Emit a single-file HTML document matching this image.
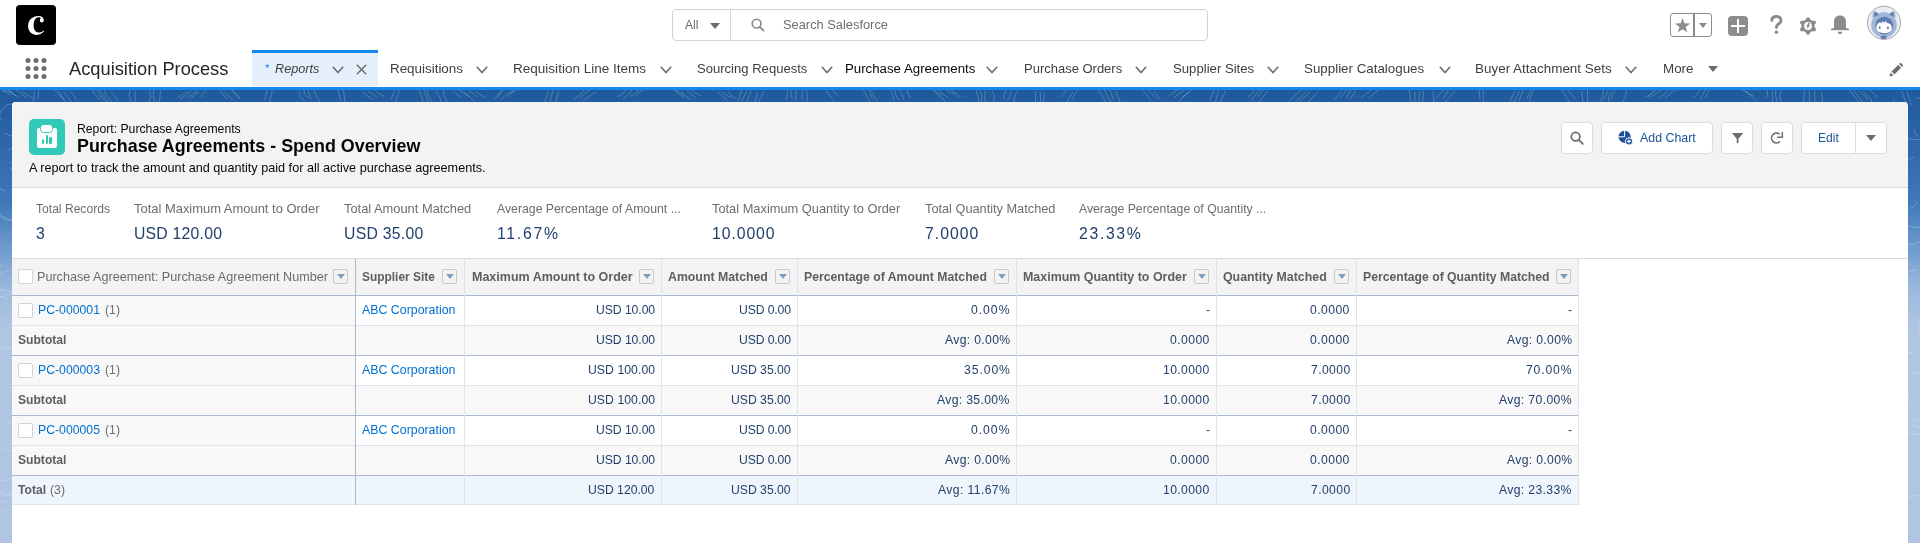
<!DOCTYPE html>
<html><head><meta charset="utf-8">
<style>
*{box-sizing:border-box;margin:0;padding:0}
html,body{width:1920px;height:543px;overflow:hidden;background:#fff;font-family:"Liberation Sans",sans-serif}
.a{position:absolute}
.t{position:absolute;line-height:1;white-space:pre;font-family:"Liberation Sans",sans-serif;will-change:transform}
svg{position:absolute;overflow:visible}
.btn{position:absolute;background:#fff;border:1px solid #dddbda;border-radius:4px}
.cb{position:absolute;width:15px;height:15px;background:#fff;border:1px solid #d4d4d4;border-radius:2px}
.dd{position:absolute;width:15px;height:15px;border:1px solid #c9c9c9;border-radius:2px}
.dd:after{content:"";position:absolute;left:3px;top:4px;border-left:4px solid transparent;border-right:4px solid transparent;border-top:5px solid #7f9cc0}
</style></head><body>
<!-- global header -->
<div class="a" style="left:16px;top:5px;width:40px;height:40px;background:#000;border-radius:4px"></div>
<svg style="left:26px;top:14px" width="20" height="24" viewBox="0 0 20 24"><path d="M12.6 2.1 C6.2 2.1 2.1 6.4 2.1 12.1 C2.1 17.6 5.9 20.9 10.8 20.9 C14 20.9 16.3 19.4 18.3 17.1 L17.6 16.4 C16.2 17.7 14.6 18.5 12.7 18.5 C9.5 18.5 7.6 15.8 7.6 11.6 C7.6 6.9 9.6 3.3 12.3 3.3 C13.6 3.3 14.3 3.8 14.8 4.6 C14.2 5 13.9 5.6 13.9 6.4 C13.9 7.6 14.7 8.4 15.8 8.4 C17 8.4 17.8 7.5 17.8 6.3 C17.8 4 15.8 2.1 12.6 2.1 Z" fill="#fff"/></svg>

<div class="a" style="left:672px;top:9px;width:536px;height:32px;border:1px solid #d4d4d4;border-radius:4px"></div>
<div class="a" style="left:730px;top:10px;width:1px;height:30px;background:#d4d4d4"></div>
<div class="a" style="left:710px;top:23px;border-left:5px solid transparent;border-right:5px solid transparent;border-top:6px solid #706e6b"></div>
<svg style="left:751px;top:18px" width="14" height="14" viewBox="0 0 14 14"><circle cx="5.6" cy="5.6" r="4.4" fill="none" stroke="#8a8886" stroke-width="1.6"/><path d="M8.8 8.8 L12.6 12.6" stroke="#8a8886" stroke-width="1.8" stroke-linecap="round"/></svg>

<!-- favorites -->
<div class="a" style="left:1670px;top:13px;width:42px;height:24px;border:1px solid #8c8c8c;border-radius:3px"></div>
<div class="a" style="left:1693px;top:14px;width:2px;height:22px;background:#8c8c8c"></div>
<svg style="left:1674.5px;top:17.8px" width="15.2" height="14.6" viewBox="0 0 24 23"><path d="M12 0 L15 8.3 L24 8.6 L16.9 14 L19.4 22.6 L12 17.6 L4.6 22.6 L7.1 14 L0 8.6 L9 8.3 Z" fill="#8c8c8c"/></svg>
<div class="a" style="left:1699px;top:23px;border-left:4px solid transparent;border-right:4px solid transparent;border-top:5px solid #8c8c8c"></div>
<!-- plus -->
<div class="a" style="left:1728px;top:16px;width:20px;height:20px;background:#8c8c8c;border-radius:4px"></div>
<div class="a" style="left:1731px;top:24.8px;width:14px;height:2.6px;background:#fff"></div>
<div class="a" style="left:1736.7px;top:19px;width:2.6px;height:14px;background:#fff"></div>
<!-- help -->
<svg style="left:1770px;top:15px" width="13" height="20" viewBox="0 0 13 20"><path d="M1.8 5.6 C1.8 2.8 3.8 1.5 6.4 1.5 C9.2 1.5 11 3 11 5.4 C11 7.4 9.6 8.3 8.2 9.2 C7 10 6.4 10.8 6.4 12.6" fill="none" stroke="#8c8c8c" stroke-width="2.9" stroke-linecap="round"/><circle cx="6.4" cy="17.2" r="1.75" fill="#8c8c8c"/></svg>
<!-- gear -->
<svg style="left:1799px;top:16.7px" width="18" height="18" viewBox="0 0 18 18"><g fill="#8c8c8c"><circle cx="9" cy="9" r="6.7"/><circle cx="9.00" cy="2.20" r="2.05"/><circle cx="14.89" cy="5.60" r="2.05"/><circle cx="14.89" cy="12.40" r="2.05"/><circle cx="9.00" cy="15.80" r="2.05"/><circle cx="3.11" cy="12.40" r="2.05"/><circle cx="3.11" cy="5.60" r="2.05"/></g><circle cx="9" cy="9" r="3.9" fill="#fff"/><path d="M9.5 5.7 L11.3 5.7 L9.8 8.3 L11.1 8.3 L7.7 12.5 L8.8 9.7 L7.2 9.7 Z" fill="#8c8c8c"/></svg>
<!-- bell -->
<svg style="left:1830px;top:15px" width="20" height="20" viewBox="0 0 20 20"><path d="M4 12.5 L4 7 C4 3 6.3 0.5 10 0.5 C13.7 0.5 16 3 16 7 L16 12.5 C16 13.1 16.8 13.3 18.4 13.4 C19.3 13.5 19.3 15.3 18.4 15.3 L1.6 15.3 C0.7 15.3 0.7 13.5 1.6 13.4 C3.2 13.3 4 13.1 4 12.5 Z" fill="#8c8c8c"/><path d="M7.9 16.7 L12.1 16.7 C12.1 18.2 11.2 19.1 10 19.1 C8.8 19.1 7.9 18.2 7.9 16.7 Z" fill="#8c8c8c"/></svg>
<!-- avatar -->
<svg style="left:1867px;top:6px" width="34" height="34" viewBox="0 0 34 34">
<defs><clipPath id="avc"><circle cx="17" cy="16.8" r="16.3"/></clipPath></defs>
<circle cx="17" cy="16.8" r="16.6" fill="#e8ecf3" stroke="#8a8a8a" stroke-width="0.7"/>
<g clip-path="url(#avc)">
<circle cx="17" cy="19" r="12.8" fill="#a3b6d5"/>
<path d="M5.5 12 C5 8.5 6 5.5 7.5 5.2 C9.5 5.5 11.5 7.5 12.5 8.5 Z M28.5 12 C29 8.5 28 5.5 26.5 5.2 C24.5 5.5 22.5 7.5 21.5 8.5 Z" fill="#a3b6d5"/>
<path d="M7.3 11 L7.6 5.6 C9 6 10.6 7.4 11.6 8.8 Z M26.7 11 L26.4 5.6 C25 6 23.4 7.4 22.4 8.8 Z" fill="#5d7db0"/>
<circle cx="17.3" cy="19.6" r="8.9" fill="#5d7db0"/>
<path d="M9.4 22.5 C9.2 18.8 11 16.5 13.2 16.3 L15.3 17.6 L15 15.2 L17.6 16.6 L19.2 14.5 L19.6 16.9 C22.6 16.8 25 19 24.9 22.5 C24.8 25.5 21.8 27.2 17.2 27.2 C12.6 27.2 9.6 25.5 9.4 22.5 Z" fill="#fff"/>
<ellipse cx="12.7" cy="21.7" rx="0.95" ry="1.4" fill="#5d7db0"/><ellipse cx="20.9" cy="22" rx="0.95" ry="1.4" fill="#5d7db0"/>
<ellipse cx="16.7" cy="31.4" rx="3.1" ry="1.8" fill="#5d7db0"/>
</g></svg>
<!-- context bar -->
<svg style="left:24.8px;top:58px" width="22" height="22" viewBox="0 0 22 22"><g fill="#706e6b">
<circle cx="3" cy="2.6" r="2.5"/><circle cx="11" cy="2.6" r="2.5"/><circle cx="19" cy="2.6" r="2.5"/>
<circle cx="3" cy="10.5" r="2.5"/><circle cx="11" cy="10.5" r="2.5"/><circle cx="19" cy="10.5" r="2.5"/>
<circle cx="3" cy="18.5" r="2.5"/><circle cx="11" cy="18.5" r="2.5"/><circle cx="19" cy="18.5" r="2.5"/></g></svg>
<div class="a" style="left:252px;top:50px;width:126px;height:36px;background:#e6f0fc"></div>
<div class="a" style="left:252px;top:50px;width:126px;height:3px;background:#1589ee"></div>
<div class="t" style="left:265px;top:63px;font-size:11.5px;color:#1589ee">*</div>
<!-- chevrons -->
<svg style="left:332.00px;top:66px" width="12" height="8" viewBox="0 0 12 8"><path d="M0.8 0.8 L6 6.6 L11.2 0.8" fill="none" stroke="#706e6b" stroke-width="1.6"/></svg>
<svg style="left:476.25px;top:66px" width="12" height="8" viewBox="0 0 12 8"><path d="M0.8 0.8 L6 6.6 L11.2 0.8" fill="none" stroke="#706e6b" stroke-width="1.6"/></svg>
<svg style="left:660.00px;top:66px" width="12" height="8" viewBox="0 0 12 8"><path d="M0.8 0.8 L6 6.6 L11.2 0.8" fill="none" stroke="#706e6b" stroke-width="1.6"/></svg>
<svg style="left:820.50px;top:66px" width="12" height="8" viewBox="0 0 12 8"><path d="M0.8 0.8 L6 6.6 L11.2 0.8" fill="none" stroke="#706e6b" stroke-width="1.6"/></svg>
<svg style="left:986.00px;top:66px" width="12" height="8" viewBox="0 0 12 8"><path d="M0.8 0.8 L6 6.6 L11.2 0.8" fill="none" stroke="#706e6b" stroke-width="1.6"/></svg>
<svg style="left:1135.00px;top:66px" width="12" height="8" viewBox="0 0 12 8"><path d="M0.8 0.8 L6 6.6 L11.2 0.8" fill="none" stroke="#706e6b" stroke-width="1.6"/></svg>
<svg style="left:1267.00px;top:66px" width="12" height="8" viewBox="0 0 12 8"><path d="M0.8 0.8 L6 6.6 L11.2 0.8" fill="none" stroke="#706e6b" stroke-width="1.6"/></svg>
<svg style="left:1438.75px;top:66px" width="12" height="8" viewBox="0 0 12 8"><path d="M0.8 0.8 L6 6.6 L11.2 0.8" fill="none" stroke="#706e6b" stroke-width="1.6"/></svg>
<svg style="left:1625.00px;top:66px" width="12" height="8" viewBox="0 0 12 8"><path d="M0.8 0.8 L6 6.6 L11.2 0.8" fill="none" stroke="#706e6b" stroke-width="1.6"/></svg>
<svg style="left:356px;top:63.5px" width="11" height="11" viewBox="0 0 11 11"><path d="M0.8 0.8 L10.2 10.2 M10.2 0.8 L0.8 10.2" stroke="#706e6b" stroke-width="1.5"/></svg>
<div class="a" style="left:1708px;top:66px;border-left:5px solid transparent;border-right:5px solid transparent;border-top:6px solid #706e6b"></div>
<!-- pencil -->
<svg style="left:1889px;top:63px" width="14" height="14" viewBox="0 0 14 14"><path d="M0.4 13.6 L1.5 9.5 L4.5 12.5 Z M2.5 8.6 L9.2 1.9 L12.1 4.8 L5.4 11.5 Z M10.1 1 L10.9 0.2 C11.3 -0.2 11.9 -0.2 12.3 0.2 L13.8 1.7 C14.2 2.1 14.2 2.7 13.8 3.1 L13 3.9 Z" fill="#706e6b"/></svg>

<div class="a" style="left:0;top:87px;width:1920px;height:3px;background:#1589ee"></div>

<!-- page background -->
<div class="a" style="left:0;top:90px;width:1920px;height:453px;background:linear-gradient(to bottom,#1d5a9b 0px,#2a64a8 44px,#3d77b8 110px,#6b98cc 155px,#9cb9dd 199px,#b0c5e2 239px,#b0c5e2 453px)"></div>

<!-- pattern -->
<svg style="left:0;top:90px;overflow:hidden" width="1920" height="453" viewBox="0 0 1920 453"><path fill="none" stroke="#ffffff" stroke-opacity="0.22" stroke-width="1" d="M0.0 -1.2 L11.1 5.0 M5.6 -1.3 L16.4 5.8 M9.8 1.6 L18.7 7.7 M15.8 -0.2 L26.7 7.9 M21.9 1.3 L33.6 8.9 M34.3 0.4 L33.6 15.0 M38.7 -2.0 L38.0 9.4 M54.0 -0.7 L64.3 10.2 M58.4 1.1 L64.8 10.9 M63.6 1.8 L72.9 13.7 M71.0 1.6 L76.8 9.8 M91.4 -1.7 Q94.4 4.3 100.1 10.2 M97.3 -1.0 Q98.2 5.0 105.4 11.1 M99.6 0.2 Q103.4 6.3 108.0 12.4 M104.5 0.6 Q105.5 6.5 112.6 12.5 M110.7 1.9 Q116.5 6.4 117.4 11.0 M130.4 -1.8 Q127.8 5.0 130.7 11.8 M135.3 1.3 Q134.6 6.3 135.6 11.4 M149.9 0.3 Q151.9 7.2 148.5 14.0 M154.2 -0.8 Q152.2 5.4 154.6 11.6 M160.4 0.5 Q160.1 7.7 159.0 14.8 M186.7 1.9 L177.7 7.6 M191.1 1.3 L179.7 9.7 M197.1 0.9 L187.4 7.6 M199.1 1.4 L190.5 8.9 M207.6 -1.2 L199.6 7.3 M220.0 0.3 L226.8 9.0 M224.3 1.9 L233.1 10.3 M230.6 -1.4 L240.0 9.2 M232.2 0.8 L239.6 7.8 M267.3 -1.7 L264.8 10.0 M272.3 0.9 L269.0 15.0 M299.3 1.8 Q298.2 6.3 304.7 10.8 M304.3 -0.5 Q302.8 4.0 309.0 8.5 M307.6 -1.0 Q308.7 4.0 311.0 9.0 M313.3 -0.2 Q316.7 6.7 320.7 13.6 M338.2 -0.0 L340.8 11.1 M343.4 -2.0 L345.0 13.5 M362.2 1.6 Q366.4 5.7 373.5 9.8 M367.5 1.2 Q375.3 4.5 376.6 7.8 M373.7 -0.7 Q375.9 2.7 383.9 6.1 M395.1 -0.9 L391.2 9.4 M399.5 -0.0 L395.7 11.8 M419.4 0.8 Q422.3 8.1 424.0 15.4 M424.0 -1.5 Q425.9 5.6 428.4 12.6 M427.5 -1.4 Q426.5 5.6 432.8 12.6 M435.2 0.6 Q440.5 6.3 441.0 11.9 M443.1 -0.1 Q442.9 6.5 448.0 13.1 M452.6 0.8 L461.9 7.9 M457.7 -0.4 L469.4 6.6 M463.8 1.7 L475.3 12.0 M469.0 0.5 L477.7 6.8 M475.9 1.5 L486.1 8.4 M501.6 1.2 Q501.3 5.0 494.2 8.8 M505.8 -1.6 Q499.8 1.9 496.8 5.4 M513.5 0.9 Q503.3 5.5 500.9 10.1 M516.6 -0.3 Q510.7 2.8 508.5 5.9 M548.0 1.7 L544.1 14.3 M552.9 0.1 L549.1 15.6 M558.7 0.3 L555.6 12.6 M584.7 0.1 L574.1 9.7 M590.4 -0.5 L579.8 7.6 M596.1 1.4 L583.6 10.3 M627.1 -1.9 Q626.0 2.4 617.4 6.8 M632.1 0.3 Q627.7 4.6 623.3 9.0 M637.9 -0.3 Q637.6 3.0 630.0 6.4 M644.7 -1.5 Q639.6 2.2 635.7 5.9 M671.4 -1.5 Q679.7 1.8 683.5 5.0 M675.5 0.7 Q678.4 4.3 684.1 7.8 M680.8 0.9 Q683.0 5.5 691.1 10.0 M686.5 0.1 Q690.4 3.8 695.3 7.5 M690.4 -1.4 Q693.2 2.2 700.7 5.7 M717.1 1.7 Q723.2 6.1 727.3 10.5 M721.7 1.6 Q723.9 4.6 731.0 7.7 M728.2 1.6 Q729.4 5.3 736.5 8.9 M741.8 -1.2 L738.0 11.5 M747.1 0.3 L740.5 13.5 M751.2 0.8 L745.6 14.6 M757.6 1.3 L755.1 13.1 M764.2 1.0 L758.3 12.5 M787.1 -0.9 Q787.9 4.6 786.0 10.1 M792.2 -1.7 Q789.3 3.7 792.8 9.1 M796.6 -1.2 Q795.4 5.1 796.1 11.4 M802.9 -0.4 Q801.3 4.7 802.0 9.8 M806.0 -1.6 Q808.6 6.1 806.5 13.9 M826.6 1.0 L834.8 11.8 M831.1 -1.4 L838.5 6.3 M863.2 -0.4 L870.4 12.4 M868.7 -0.1 L872.7 9.5 M871.3 0.5 L876.8 11.3 M890.9 0.1 Q892.6 5.3 894.3 10.6 M895.3 0.3 Q894.3 5.2 899.5 10.1 M899.3 0.0 Q903.7 5.2 904.0 10.4 M906.8 -0.9 Q907.3 3.8 910.4 8.5 M929.7 -1.7 L941.7 5.2 M934.9 1.7 L945.6 11.5 M938.3 -0.0 L948.1 8.3 M945.3 -0.3 L954.5 4.5 M949.9 -0.9 L960.7 7.3 M975.8 -0.4 Q978.7 6.2 978.6 12.8 M979.9 0.3 Q982.5 6.2 981.6 12.1 M985.1 0.9 Q983.8 8.2 986.5 15.6 M992.3 1.2 Q995.9 6.4 993.0 11.5 M1006.7 -0.6 Q1002.6 4.6 1004.0 9.8 M1011.4 0.4 Q1010.5 5.5 1007.5 10.5 M1017.4 1.3 Q1012.8 7.1 1014.0 13.0 M1035.5 1.4 L1035.5 13.2 M1040.0 0.8 L1040.9 14.4 M1044.2 1.8 L1043.4 13.4 M1068.5 -1.8 L1060.7 6.7 M1073.0 1.7 L1067.0 11.7 M1077.2 -0.1 L1071.9 10.1 M1098.6 -0.2 L1106.2 13.0 M1104.2 -0.2 L1111.6 12.9 M1109.6 -1.4 L1113.7 10.3 M1115.6 1.0 L1120.6 13.7 M1143.1 0.2 L1150.8 10.3 M1148.0 -0.1 L1157.5 9.3 M1154.4 1.6 L1160.5 9.7 M1178.2 -0.6 L1168.5 6.0 M1183.6 0.8 L1173.5 7.6 M1188.5 1.7 L1177.9 13.0 M1192.8 -0.7 L1181.0 8.2 M1214.2 -0.4 L1209.7 10.9 M1218.6 0.2 L1215.1 13.1 M1225.5 1.0 L1219.8 13.1 M1254.8 -1.9 Q1254.1 2.4 1248.0 6.7 M1259.7 0.2 Q1254.2 5.5 1251.3 10.8 M1263.9 -1.9 Q1261.9 2.3 1257.4 6.5 M1267.4 0.8 Q1262.9 6.9 1258.6 12.9 M1301.0 -0.0 L1289.4 10.7 M1306.0 1.7 L1295.6 11.5 M1310.6 1.4 L1299.6 11.6 M1317.8 1.8 L1307.4 12.7 M1341.8 1.0 L1333.6 10.5 M1347.7 -1.2 L1339.8 8.2 M1351.5 -1.8 L1346.0 8.7 M1355.6 1.1 L1349.9 10.1 M1373.4 -1.2 Q1366.3 3.2 1361.5 7.7 M1378.5 0.0 Q1372.8 4.4 1368.0 8.7 M1409.2 0.2 L1410.9 13.9 M1415.0 1.8 L1414.6 14.7 M1419.9 1.5 L1418.2 16.0 M1423.6 1.2 L1422.5 12.4 M1433.1 1.2 L1434.2 15.9 M1443.4 -0.3 L1435.4 9.5 M1449.2 -1.4 L1442.8 9.3 M1455.0 1.0 L1445.3 12.2 M1478.8 -1.4 L1480.1 9.7 M1483.1 0.1 L1483.4 12.2 M1514.6 1.2 L1508.6 15.1 M1519.4 1.3 L1512.5 15.2 M1523.4 -1.4 L1519.0 11.1 M1531.6 -1.7 L1526.9 9.2 M1533.0 -0.6 L1529.4 11.7 M1561.3 -0.2 L1569.5 12.0 M1567.1 -0.8 L1576.2 10.2 M1581.6 1.0 L1583.3 14.7 M1587.5 -1.7 L1587.7 12.9 M1603.4 -0.7 Q1604.1 5.7 1599.6 12.2 M1607.6 0.7 Q1606.8 5.6 1602.7 10.4 M1612.1 0.4 Q1607.2 6.4 1609.0 12.4 M1616.7 -0.4 Q1610.9 4.5 1611.9 9.5 M1626.7 0.6 Q1626.7 6.5 1622.5 12.4 M1652.8 0.8 Q1652.7 3.9 1644.9 7.1 M1658.4 -1.9 Q1651.8 2.7 1648.0 7.4 M1662.2 -0.5 Q1656.5 3.4 1650.6 7.2 M1669.5 -1.4 Q1666.1 3.6 1658.4 8.6 M1676.0 0.0 Q1667.9 4.1 1665.5 8.1 M1700.1 0.3 L1693.4 8.5 M1705.5 -0.6 L1699.8 10.0 M1709.9 -1.5 L1705.0 8.1 M1741.1 -0.7 L1753.8 6.3 M1745.4 0.7 L1756.9 11.4 M1766.4 -1.3 Q1769.6 3.9 1765.1 9.1 M1772.3 0.7 Q1773.8 7.6 1771.5 14.6 M1775.9 -1.9 Q1774.1 4.8 1777.1 11.6 M1781.2 0.3 Q1778.4 5.7 1780.9 11.1 M1804.8 0.7 L1803.0 14.4 M1809.1 -0.1 L1809.5 15.6 M1814.5 1.0 L1815.2 14.8 M1821.3 1.4 L1823.1 14.1 M1849.9 0.1 Q1854.0 6.3 1859.4 12.5 M1854.0 0.5 Q1858.0 6.7 1863.2 12.8 M1859.4 1.5 Q1866.6 5.8 1867.8 10.0 M1863.4 1.5 Q1871.6 7.6 1872.2 13.7 M1869.7 0.2 Q1874.8 3.8 1877.4 7.5 M1901.7 1.0 L1906.9 14.9 M1906.8 1.2 L1911.8 15.8 M2.4 29.2 A18.0 18.0 0 0 1 -10.4 11.2 M-14.5 16.3 A11.8 11.8 0 0 1 -12.7 4.6 M2.6 1.6 A11.1 11.1 0 0 1 11.6 2.1 M-0.8 28.3 A14.8 14.8 0 0 1 13.3 13.4 M20.5 45.8 A18.4 18.4 0 0 1 4.8 43.1 M-16.2 77.6 A26.4 26.4 0 0 1 -26.2 52.5 M7.5 60.8 A12.4 12.4 0 0 1 16.5 57.6 M20.8 75.6 A9.1 9.1 0 0 1 9.9 78.3 M21.2 49.6 A27.8 27.8 0 0 1 26.8 83.1 M-6.5 95.5 A25.1 25.1 0 0 1 -9.3 76.9 M9.4 72.8 A10.7 10.7 0 0 1 18.3 73.3 M5.1 101.0 A19.0 19.0 0 0 1 -7.0 90.3 M16.5 129.6 A21.0 21.0 0 0 1 -0.9 123.9 M10.7 131.1 A22.7 22.7 0 0 1 -7.8 112.5 M-29.8 119.7 A29.6 29.6 0 0 1 -23.8 88.5 M-24.2 124.6 A20.9 20.9 0 0 1 -10.3 109.5 M2.4 175.4 A24.6 24.6 0 0 1 -16.8 167.0 M20.9 164.9 A11.3 11.3 0 0 1 21.3 177.9 M-24.7 200.1 A28.4 28.4 0 0 1 -16.6 180.1 M-7.0 217.2 A22.2 22.2 0 0 1 -13.5 191.9 M-7.7 199.4 A19.4 19.4 0 0 1 9.9 180.8 M-5.5 212.8 A19.7 19.7 0 0 1 18.3 205.5 M-10.4 208.4 A17.6 17.6 0 0 1 8.6 209.6 M-3.2 200.4 A23.8 23.8 0 0 1 16.0 205.3 M12.1 257.8 A13.7 13.7 0 0 1 -5.1 248.7 M10.1 232.4 A17.9 17.9 0 0 1 14.7 247.7 M15.5 224.5 A21.4 21.4 0 0 1 29.4 242.1 M-28.0 257.4 A28.0 28.0 0 0 1 -2.5 241.1 M0.3 299.1 A9.2 9.2 0 0 1 2.2 288.2 M-5.2 314.0 A13.8 13.8 0 0 1 2.1 308.2 M12.1 333.1 A11.8 11.8 0 0 1 4.1 329.6 M15.8 295.7 A26.3 26.3 0 0 1 30.2 304.8 M32.6 333.2 A23.5 23.5 0 0 1 31.1 349.9 M25.2 355.4 A21.2 21.2 0 0 1 -1.2 356.8 M-20.7 357.3 A17.0 17.0 0 0 1 -15.2 347.2 M13.9 383.2 A9.7 9.7 0 0 1 2.2 390.5 M14.3 405.0 A24.1 24.1 0 0 1 -4.8 399.1 M5.8 411.9 A9.9 9.9 0 0 1 -2.5 409.3 M-9.6 425.2 A11.5 11.5 0 0 1 6.5 421.3 M28.1 420.2 A20.5 20.5 0 0 1 23.0 447.5 M22.0 421.9 A11.9 11.9 0 0 1 23.9 438.3 M4.3 455.8 A12.7 12.7 0 0 1 -0.9 447.6 M10.3 456.4 A11.6 11.6 0 0 1 1.2 455.4 M1900.3 -1.4 A18.8 18.8 0 0 1 1913.5 -6.8 M1896.4 21.7 A19.9 19.9 0 0 1 1894.0 9.3 M1915.4 8.1 A19.4 19.4 0 0 1 1933.3 18.0 M1919.9 49.4 A22.3 22.3 0 0 1 1904.7 47.1 M1924.3 22.8 A15.9 15.9 0 0 1 1938.5 36.3 M1918.5 46.3 A8.4 8.4 0 0 1 1913.8 39.8 M1893.2 63.1 A27.4 27.4 0 0 1 1879.3 31.3 M1888.7 60.6 A21.4 21.4 0 0 1 1893.9 45.1 M1891.4 86.2 A14.9 14.9 0 0 1 1892.9 70.2 M1900.7 96.5 A14.9 14.9 0 0 1 1903.3 82.8 M1895.9 86.4 A26.4 26.4 0 0 1 1913.7 66.9 M1894.8 107.3 A19.4 19.4 0 0 1 1887.8 96.0 M1917.1 110.8 A8.9 8.9 0 0 1 1910.0 118.2 M1940.8 105.5 A25.8 25.8 0 0 1 1934.3 126.9 M1923.4 137.0 A28.2 28.2 0 0 1 1892.6 122.9 M1927.2 144.5 A21.9 21.9 0 0 1 1908.2 154.7 M1904.9 139.0 A9.3 9.3 0 0 1 1902.7 131.0 M1916.9 179.8 A28.4 28.4 0 0 1 1883.6 166.5 M1887.5 149.7 A23.7 23.7 0 0 1 1908.6 129.2 M1921.8 170.0 A13.7 13.7 0 0 1 1927.2 180.6 M1930.2 194.5 A28.0 28.0 0 0 1 1933.0 218.0 M1903.3 234.5 A26.6 26.6 0 0 1 1885.0 207.5 M1916.6 227.0 A15.6 15.6 0 0 1 1918.3 244.2 M1905.2 266.9 A22.1 22.1 0 0 1 1900.1 247.4 M1919.6 243.8 A8.7 8.7 0 0 1 1926.5 244.7 M1896.8 249.8 A9.0 9.0 0 0 1 1904.7 243.1 M1900.5 281.9 A27.4 27.4 0 0 1 1900.9 244.4 M1903.7 274.6 A14.0 14.0 0 0 1 1910.6 262.1 M1902.3 272.8 A13.0 13.0 0 0 1 1912.8 272.6 M1888.3 297.0 A20.0 20.0 0 0 1 1884.3 281.2 M1892.6 278.0 A22.3 22.3 0 0 1 1912.9 262.3 M1914.6 318.4 A15.3 15.3 0 0 1 1910.1 298.2 M1902.2 283.5 A23.8 23.8 0 0 1 1929.5 291.8 M1937.4 327.8 A26.1 26.1 0 0 1 1907.4 326.6 M1898.4 338.4 A17.1 17.1 0 0 1 1894.3 318.5 M1899.6 342.6 A22.2 22.2 0 0 1 1893.9 316.2 M1939.7 308.7 A24.2 24.2 0 0 1 1938.9 343.3 M1883.6 350.0 A26.7 26.7 0 0 1 1904.5 325.9 M1886.3 363.3 A21.7 21.7 0 0 1 1886.1 341.0 M1909.7 335.3 A16.7 16.7 0 0 1 1926.6 346.3 M1898.0 388.1 A23.7 23.7 0 0 1 1885.6 370.7 M1931.7 343.6 A26.5 26.5 0 0 1 1945.6 369.4 M1895.5 350.6 A23.6 23.6 0 0 1 1926.3 348.0 M1902.4 414.0 A21.7 21.7 0 0 1 1886.4 394.3 M1943.9 417.2 A28.7 28.7 0 0 1 1940.3 437.4 M1906.1 409.9 A17.2 17.2 0 0 1 1922.0 405.9 M1922.4 467.2 A23.7 23.7 0 0 1 1909.3 474.5"/></svg>
<!-- card -->
<div class="a" style="left:12px;top:102px;width:1896px;height:460px;background:#fff;border-radius:4px 4px 0 0;overflow:hidden">
  <div class="a" style="left:0;top:0;width:1896px;height:86px;background:#f3f3f3;border-bottom:1px solid #dddbda"></div>
</div>
<!-- report icon -->
<div class="a" style="left:29px;top:119px;width:36px;height:36px;background:#33c9b9;border-radius:5px"></div>
<div class="a" style="left:37px;top:128px;width:20px;height:20px;background:#fff;border-radius:2px"></div>
<div class="a" style="left:40.3px;top:124.2px;width:13px;height:8.6px;background:#fff;border:1.5px solid #33c9b9;border-radius:3.6px"></div>
<div class="a" style="left:42px;top:139px;width:2.3px;height:4.5px;background:#33c9b9;border-radius:1px"></div>
<div class="a" style="left:45.6px;top:135px;width:2.3px;height:8.5px;background:#33c9b9;border-radius:1px"></div>
<div class="a" style="left:49.4px;top:137px;width:2.5px;height:6.5px;background:#33c9b9;border-radius:1px"></div>

<!-- buttons -->
<div class="btn" style="left:1561px;top:122px;width:32px;height:32px"></div>
<svg style="left:1570px;top:131px" width="14" height="14" viewBox="0 0 14 14"><circle cx="5.6" cy="5.6" r="4.3" fill="none" stroke="#706e6b" stroke-width="1.7"/><path d="M8.8 8.8 L12.8 12.8" stroke="#706e6b" stroke-width="1.9" stroke-linecap="round"/></svg>
<div class="btn" style="left:1601px;top:122px;width:112px;height:32px"></div>
<svg style="left:1617px;top:130px" width="16" height="16" viewBox="0 0 16 16"><circle cx="7.6" cy="6.8" r="6.1" fill="#1b5297"/><path d="M1.2 6.8 L7.6 6.8 L7.6 0.4" fill="none" stroke="#fff" stroke-width="1"/><circle cx="12" cy="11.4" r="3.7" fill="#1b5297" stroke="#fff" stroke-width="1"/><path d="M10 11.4 L14 11.4 M12 9.5 L12 13.3" stroke="#fff" stroke-width="1.2"/></svg>
<div class="btn" style="left:1721px;top:122px;width:32px;height:32px"></div>
<svg style="left:1731.5px;top:132px" width="12" height="12" viewBox="0 0 12 12"><path d="M0 1 L11.2 1 L6.5 6.8 L6.5 11 L4.7 11 L4.7 6.8 Z" fill="#706e6b"/></svg>
<div class="btn" style="left:1761px;top:122px;width:32px;height:32px"></div>
<svg style="left:1770px;top:131px" width="14" height="14" viewBox="0 0 14 14"><path d="M9.65 3.25 A4.9 4.9 0 1 0 9.96 10.46" fill="none" stroke="#706e6b" stroke-width="1.6"/><path d="M7.2 5.4 L11.6 5.4 L11.6 1 L13.1 1 L13.1 6.9 L7.2 6.9 Z" fill="#706e6b"/></svg>
<div class="btn" style="left:1801px;top:122px;width:86px;height:32px"></div>
<div class="a" style="left:1855px;top:123px;width:1px;height:30px;background:#dddbda"></div>
<div class="a" style="left:1866px;top:135px;border-left:5px solid transparent;border-right:5px solid transparent;border-top:6px solid #706e6b"></div>

<!-- summary bottom line -->
<div class="a" style="left:12px;top:258px;width:1896px;height:1px;background:#dddbda"></div>

<!-- table -->
<div class="a" style="left:12px;top:259px;width:1566px;height:36px;background:#f3f3f3"></div>
<div class="a" style="left:12px;top:295px;width:1566px;height:1px;background:#aab9cc"></div>
<div class="a" style="left:12px;top:296px;width:343px;height:29px;background:#f8f8f8"></div>
<div class="a" style="left:12px;top:325px;width:1566px;height:1px;background:#dfe4ec"></div>
<div class="a" style="left:12px;top:326px;width:1566px;height:29px;background:#f8f8f8"></div>
<div class="a" style="left:12px;top:355px;width:1566px;height:1px;background:#aab9cc"></div>
<div class="a" style="left:12px;top:356px;width:343px;height:29px;background:#f8f8f8"></div>
<div class="a" style="left:12px;top:385px;width:1566px;height:1px;background:#dfe4ec"></div>
<div class="a" style="left:12px;top:386px;width:1566px;height:29px;background:#f8f8f8"></div>
<div class="a" style="left:12px;top:415px;width:1566px;height:1px;background:#aab9cc"></div>
<div class="a" style="left:12px;top:416px;width:343px;height:29px;background:#f8f8f8"></div>
<div class="a" style="left:12px;top:445px;width:1566px;height:1px;background:#dfe4ec"></div>
<div class="a" style="left:12px;top:446px;width:1566px;height:29px;background:#f8f8f8"></div>
<div class="a" style="left:12px;top:475px;width:1566px;height:1px;background:#aab9cc"></div>
<div class="a" style="left:12px;top:476px;width:1566px;height:28px;background:#eef5fc"></div>
<div class="a" style="left:12px;top:504px;width:1566px;height:1px;background:#dfe4ec"></div>
<div class="a" style="left:355px;top:259px;width:1px;height:246px;background:#aab9cc"></div>
<div class="a" style="left:464px;top:259px;width:1px;height:246px;background:#dfe4ec"></div>
<div class="a" style="left:661px;top:259px;width:1px;height:246px;background:#dfe4ec"></div>
<div class="a" style="left:797px;top:259px;width:1px;height:246px;background:#dfe4ec"></div>
<div class="a" style="left:1016px;top:259px;width:1px;height:246px;background:#dfe4ec"></div>
<div class="a" style="left:1216px;top:259px;width:1px;height:246px;background:#dfe4ec"></div>
<div class="a" style="left:1356px;top:259px;width:1px;height:246px;background:#dfe4ec"></div>
<div class="a" style="left:1578px;top:259px;width:1px;height:246px;background:#dfe4ec"></div>
<div class="cb" style="left:18px;top:269px"></div>
<div class="cb" style="left:18px;top:303px"></div>
<div class="cb" style="left:18px;top:363px"></div>
<div class="cb" style="left:18px;top:423px"></div>
<div class="dd" style="left:333px;top:269px"></div>
<div class="dd" style="left:442px;top:269px"></div>
<div class="dd" style="left:639px;top:269px"></div>
<div class="dd" style="left:775px;top:269px"></div>
<div class="dd" style="left:994px;top:269px"></div>
<div class="dd" style="left:1194px;top:269px"></div>
<div class="dd" style="left:1334px;top:269px"></div>
<div class="dd" style="left:1556px;top:269px"></div>

<div class="t" style="left:68.50px;top:60px;font-size:18.279px;font-weight:400;font-style:normal;color:#262626">Acquisition Process</div>
<div class="t" style="left:274.50px;top:63px;font-size:12.651px;font-weight:400;font-style:italic;color:#3e3e3c">Reports</div>
<div class="t" style="left:389.50px;top:62px;font-size:13.401px;font-weight:400;font-style:normal;color:#3e3e3c">Requisitions</div>
<div class="t" style="left:513.00px;top:62px;font-size:13.544px;font-weight:400;font-style:normal;color:#3e3e3c">Requisition Line Items</div>
<div class="t" style="left:697.00px;top:62px;font-size:13.078px;font-weight:400;font-style:normal;color:#3e3e3c">Sourcing Requests</div>
<div class="t" style="left:845.00px;top:62px;font-size:13.264px;font-weight:400;font-style:normal;color:#080707">Purchase Agreements</div>
<div class="t" style="left:1023.75px;top:62px;font-size:12.998px;font-weight:400;font-style:normal;color:#3e3e3c">Purchase Orders</div>
<div class="t" style="left:1172.50px;top:62px;font-size:13.169px;font-weight:400;font-style:normal;color:#3e3e3c">Supplier Sites</div>
<div class="t" style="left:1304.25px;top:62px;font-size:13.352px;font-weight:400;font-style:normal;color:#3e3e3c">Supplier Catalogues</div>
<div class="t" style="left:1475.00px;top:62px;font-size:13.444px;font-weight:400;font-style:normal;color:#3e3e3c">Buyer Attachment Sets</div>
<div class="t" style="left:1662.50px;top:62px;font-size:13.386px;font-weight:400;font-style:normal;color:#3e3e3c">More</div>
<div class="t" style="left:685.00px;top:19px;font-size:12.147px;font-weight:400;font-style:normal;color:#706e6b">All</div>
<div class="t" style="left:783.00px;top:19px;font-size:12.85px;font-weight:400;font-style:normal;color:#706e6b">Search Salesforce</div>
<div class="t" style="left:77.20px;top:123px;font-size:12.227px;font-weight:400;font-style:normal;color:#080707">Report: Purchase Agreements</div>
<div class="t" style="left:77.00px;top:138px;font-size:17.903px;font-weight:700;font-style:normal;color:#080707">Purchase Agreements - Spend Overview</div>
<div class="t" style="left:29.00px;top:162px;font-size:12.668px;font-weight:400;font-style:normal;color:#080707">A report to track the amount and quantity paid for all active purchase agreements.</div>
<div class="t" style="left:1639.60px;top:132px;font-size:12.393px;font-weight:400;font-style:normal;color:#1b5297">Add Chart</div>
<div class="t" style="left:1817.90px;top:132px;font-size:12.07px;font-weight:400;font-style:normal;color:#1b5297">Edit</div>
<div class="t" style="left:36.00px;top:203px;font-size:12.104px;font-weight:400;font-style:normal;color:#6b6d70">Total Records</div>
<div class="t" style="left:36.00px;top:226px;font-size:15.797px;font-weight:400;font-style:normal;color:#22406c">3</div>
<div class="t" style="left:134.30px;top:203px;font-size:12.951px;font-weight:400;font-style:normal;color:#6b6d70">Total Maximum Amount to Order</div>
<div class="t" style="left:134.30px;top:226px;font-size:15.797px;font-weight:400;font-style:normal;color:#22406c;letter-spacing:0.216px">USD 120.00</div>
<div class="t" style="left:344.30px;top:203px;font-size:12.876px;font-weight:400;font-style:normal;color:#6b6d70">Total Amount Matched</div>
<div class="t" style="left:344.30px;top:226px;font-size:15.797px;font-weight:400;font-style:normal;color:#22406c;letter-spacing:0.266px">USD 35.00</div>
<div class="t" style="left:496.70px;top:203px;font-size:12.274px;font-weight:400;font-style:normal;color:#6b6d70">Average Percentage of Amount ...</div>
<div class="t" style="left:496.70px;top:226px;font-size:15.797px;font-weight:400;font-style:normal;color:#22406c;letter-spacing:1.719px">11.67%</div>
<div class="t" style="left:712.20px;top:203px;font-size:12.841px;font-weight:400;font-style:normal;color:#6b6d70">Total Maximum Quantity to Order</div>
<div class="t" style="left:712.20px;top:226px;font-size:15.797px;font-weight:400;font-style:normal;color:#22406c;letter-spacing:0.916px">10.0000</div>
<div class="t" style="left:924.60px;top:203px;font-size:12.75px;font-weight:400;font-style:normal;color:#6b6d70">Total Quantity Matched</div>
<div class="t" style="left:924.60px;top:226px;font-size:15.797px;font-weight:400;font-style:normal;color:#22406c;letter-spacing:0.997px">7.0000</div>
<div class="t" style="left:1079.30px;top:203px;font-size:12.229px;font-weight:400;font-style:normal;color:#6b6d70">Average Percentage of Quantity ...</div>
<div class="t" style="left:1079.30px;top:226px;font-size:15.797px;font-weight:400;font-style:normal;color:#22406c;letter-spacing:1.664px">23.33%</div>
<div class="t" style="left:36.70px;top:271px;font-size:12.615px;font-weight:400;font-style:normal;color:#6b6b6b">Purchase Agreement: Purchase Agreement Number</div>
<div class="t" style="left:362.20px;top:272px;font-size:11.91px;font-weight:700;font-style:normal;color:#5e5e62">Supplier Site</div>
<div class="t" style="left:471.50px;top:271px;font-size:12.511px;font-weight:700;font-style:normal;color:#5e5e62">Maximum Amount to Order</div>
<div class="t" style="left:668.20px;top:271px;font-size:12.329px;font-weight:700;font-style:normal;color:#5e5e62">Amount Matched</div>
<div class="t" style="left:804.30px;top:271px;font-size:12.229px;font-weight:700;font-style:normal;color:#5e5e62">Percentage of Amount Matched</div>
<div class="t" style="left:1023.30px;top:271px;font-size:12.454px;font-weight:700;font-style:normal;color:#5e5e62">Maximum Quantity to Order</div>
<div class="t" style="left:1223.30px;top:271px;font-size:12.372px;font-weight:700;font-style:normal;color:#5e5e62">Quantity Matched</div>
<div class="t" style="left:1363.00px;top:271px;font-size:12.211px;font-weight:700;font-style:normal;color:#5e5e62">Percentage of Quantity Matched</div>
<div class="t" style="left:38.00px;top:304px;font-size:12.25px;font-weight:400;font-style:normal;color:#0070d2">PC-000001</div>
<div class="t" style="left:105.00px;top:304px;font-size:12.25px;font-weight:400;font-style:normal;color:#706e6b">(1)</div>
<div class="t" style="left:362.00px;top:304px;font-size:12.369px;font-weight:400;font-style:normal;color:#0070d2">ABC Corporation</div>
<div class="t" style="left:595.50px;top:304px;font-size:12.2px;font-weight:400;font-style:normal;color:#24406b;letter-spacing:-0.060px">USD 10.00</div>
<div class="t" style="left:738.60px;top:304px;font-size:12.2px;font-weight:400;font-style:normal;color:#24406b;letter-spacing:-0.113px">USD 0.00</div>
<div class="t" style="left:971.20px;top:304px;font-size:12.2px;font-weight:400;font-style:normal;color:#24406b;letter-spacing:0.977px">0.00%</div>
<div class="t" style="left:1205.94px;top:304px;font-size:12.2px;font-weight:400;font-style:normal;color:#24406b">-</div>
<div class="t" style="left:1310.30px;top:304px;font-size:12.2px;font-weight:400;font-style:normal;color:#24406b;letter-spacing:0.417px">0.0000</div>
<div class="t" style="left:1567.94px;top:304px;font-size:12.2px;font-weight:400;font-style:normal;color:#24406b">-</div>
<div class="t" style="left:18.00px;top:334px;font-size:12.126px;font-weight:700;font-style:normal;color:#5e5e62">Subtotal</div>
<div class="t" style="left:595.50px;top:334px;font-size:12.2px;font-weight:400;font-style:normal;color:#24406b;letter-spacing:-0.060px">USD 10.00</div>
<div class="t" style="left:738.60px;top:334px;font-size:12.2px;font-weight:400;font-style:normal;color:#24406b;letter-spacing:-0.113px">USD 0.00</div>
<div class="t" style="left:944.50px;top:334px;font-size:12.2px;font-weight:400;font-style:normal;color:#24406b;letter-spacing:0.336px">Avg: 0.00%</div>
<div class="t" style="left:1170.30px;top:334px;font-size:12.2px;font-weight:400;font-style:normal;color:#24406b;letter-spacing:0.417px">0.0000</div>
<div class="t" style="left:1310.30px;top:334px;font-size:12.2px;font-weight:400;font-style:normal;color:#24406b;letter-spacing:0.417px">0.0000</div>
<div class="t" style="left:1506.50px;top:334px;font-size:12.2px;font-weight:400;font-style:normal;color:#24406b;letter-spacing:0.336px">Avg: 0.00%</div>
<div class="t" style="left:38.00px;top:364px;font-size:12.25px;font-weight:400;font-style:normal;color:#0070d2">PC-000003</div>
<div class="t" style="left:105.00px;top:364px;font-size:12.25px;font-weight:400;font-style:normal;color:#706e6b">(1)</div>
<div class="t" style="left:362.00px;top:364px;font-size:12.369px;font-weight:400;font-style:normal;color:#0070d2">ABC Corporation</div>
<div class="t" style="left:587.60px;top:364px;font-size:12.2px;font-weight:400;font-style:normal;color:#24406b;letter-spacing:0.071px">USD 100.00</div>
<div class="t" style="left:731.20px;top:364px;font-size:12.2px;font-weight:400;font-style:normal;color:#24406b">USD 35.00</div>
<div class="t" style="left:963.70px;top:364px;font-size:12.2px;font-weight:400;font-style:normal;color:#24406b;letter-spacing:0.924px">35.00%</div>
<div class="t" style="left:1163.40px;top:364px;font-size:12.2px;font-weight:400;font-style:normal;color:#24406b;letter-spacing:0.366px">10.0000</div>
<div class="t" style="left:1310.50px;top:364px;font-size:12.2px;font-weight:400;font-style:normal;color:#24406b;letter-spacing:0.377px">7.0000</div>
<div class="t" style="left:1526.10px;top:364px;font-size:12.2px;font-weight:400;font-style:normal;color:#24406b;letter-spacing:0.844px">70.00%</div>
<div class="t" style="left:18.00px;top:394px;font-size:12.126px;font-weight:700;font-style:normal;color:#5e5e62">Subtotal</div>
<div class="t" style="left:587.60px;top:394px;font-size:12.2px;font-weight:400;font-style:normal;color:#24406b;letter-spacing:0.071px">USD 100.00</div>
<div class="t" style="left:731.20px;top:394px;font-size:12.2px;font-weight:400;font-style:normal;color:#24406b">USD 35.00</div>
<div class="t" style="left:937.40px;top:394px;font-size:12.2px;font-weight:400;font-style:normal;color:#24406b;letter-spacing:0.334px">Avg: 35.00%</div>
<div class="t" style="left:1163.40px;top:394px;font-size:12.2px;font-weight:400;font-style:normal;color:#24406b;letter-spacing:0.366px">10.0000</div>
<div class="t" style="left:1310.50px;top:394px;font-size:12.2px;font-weight:400;font-style:normal;color:#24406b;letter-spacing:0.377px">7.0000</div>
<div class="t" style="left:1499.10px;top:394px;font-size:12.2px;font-weight:400;font-style:normal;color:#24406b;letter-spacing:0.364px">Avg: 70.00%</div>
<div class="t" style="left:38.00px;top:424px;font-size:12.25px;font-weight:400;font-style:normal;color:#0070d2">PC-000005</div>
<div class="t" style="left:105.00px;top:424px;font-size:12.25px;font-weight:400;font-style:normal;color:#706e6b">(1)</div>
<div class="t" style="left:362.00px;top:424px;font-size:12.369px;font-weight:400;font-style:normal;color:#0070d2">ABC Corporation</div>
<div class="t" style="left:595.50px;top:424px;font-size:12.2px;font-weight:400;font-style:normal;color:#24406b;letter-spacing:-0.060px">USD 10.00</div>
<div class="t" style="left:738.60px;top:424px;font-size:12.2px;font-weight:400;font-style:normal;color:#24406b;letter-spacing:-0.113px">USD 0.00</div>
<div class="t" style="left:971.20px;top:424px;font-size:12.2px;font-weight:400;font-style:normal;color:#24406b;letter-spacing:0.977px">0.00%</div>
<div class="t" style="left:1205.94px;top:424px;font-size:12.2px;font-weight:400;font-style:normal;color:#24406b">-</div>
<div class="t" style="left:1310.30px;top:424px;font-size:12.2px;font-weight:400;font-style:normal;color:#24406b;letter-spacing:0.417px">0.0000</div>
<div class="t" style="left:1567.94px;top:424px;font-size:12.2px;font-weight:400;font-style:normal;color:#24406b">-</div>
<div class="t" style="left:18.00px;top:454px;font-size:12.126px;font-weight:700;font-style:normal;color:#5e5e62">Subtotal</div>
<div class="t" style="left:595.50px;top:454px;font-size:12.2px;font-weight:400;font-style:normal;color:#24406b;letter-spacing:-0.060px">USD 10.00</div>
<div class="t" style="left:738.60px;top:454px;font-size:12.2px;font-weight:400;font-style:normal;color:#24406b;letter-spacing:-0.113px">USD 0.00</div>
<div class="t" style="left:944.50px;top:454px;font-size:12.2px;font-weight:400;font-style:normal;color:#24406b;letter-spacing:0.336px">Avg: 0.00%</div>
<div class="t" style="left:1170.30px;top:454px;font-size:12.2px;font-weight:400;font-style:normal;color:#24406b;letter-spacing:0.417px">0.0000</div>
<div class="t" style="left:1310.30px;top:454px;font-size:12.2px;font-weight:400;font-style:normal;color:#24406b;letter-spacing:0.417px">0.0000</div>
<div class="t" style="left:1506.50px;top:454px;font-size:12.2px;font-weight:400;font-style:normal;color:#24406b;letter-spacing:0.336px">Avg: 0.00%</div>
<div class="t" style="left:18.00px;top:484px;font-size:12.1px;font-weight:700;font-style:normal;color:#5e5e62">Total</div>
<div class="t" style="left:50.00px;top:484px;font-size:12.25px;font-weight:400;font-style:normal;color:#706e6b">(3)</div>
<div class="t" style="left:588.20px;top:484px;font-size:12.2px;font-weight:400;font-style:normal;color:#24406b">USD 120.00</div>
<div class="t" style="left:731.20px;top:484px;font-size:12.2px;font-weight:400;font-style:normal;color:#24406b">USD 35.00</div>
<div class="t" style="left:937.80px;top:484px;font-size:12.2px;font-weight:400;font-style:normal;color:#24406b;letter-spacing:0.385px">Avg: 11.67%</div>
<div class="t" style="left:1163.40px;top:484px;font-size:12.2px;font-weight:400;font-style:normal;color:#24406b;letter-spacing:0.366px">10.0000</div>
<div class="t" style="left:1310.50px;top:484px;font-size:12.2px;font-weight:400;font-style:normal;color:#24406b;letter-spacing:0.377px">7.0000</div>
<div class="t" style="left:1499.20px;top:484px;font-size:12.2px;font-weight:400;font-style:normal;color:#24406b;letter-spacing:0.354px">Avg: 23.33%</div>
</body></html>
